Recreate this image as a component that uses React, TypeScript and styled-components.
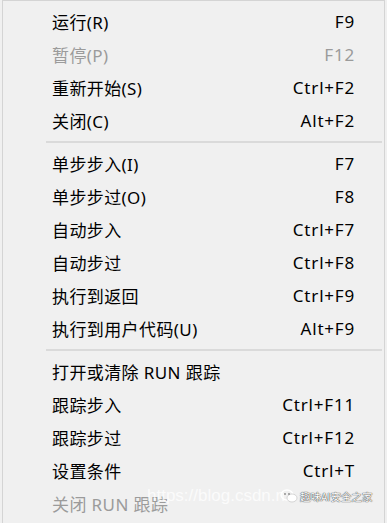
import React from 'react';
import styled, { createGlobalStyle } from 'styled-components';

type Item = { label: string; shortcut?: string; disabled?: boolean };

const groups: Item[][] = [
  [
    { label: '运行(R)', shortcut: 'F9' },
    { label: '暂停(P)', shortcut: 'F12', disabled: true },
    { label: '重新开始(S)', shortcut: 'Ctrl+F2' },
    { label: '关闭(C)', shortcut: 'Alt+F2' },
  ],
  [
    { label: '单步步入(I)', shortcut: 'F7' },
    { label: '单步步过(O)', shortcut: 'F8' },
    { label: '自动步入', shortcut: 'Ctrl+F7' },
    { label: '自动步过', shortcut: 'Ctrl+F8' },
    { label: '执行到返回', shortcut: 'Ctrl+F9' },
    { label: '执行到用户代码(U)', shortcut: 'Alt+F9' },
  ],
  [
    { label: '打开或清除 RUN 跟踪' },
    { label: '跟踪步入', shortcut: 'Ctrl+F11' },
    { label: '跟踪步过', shortcut: 'Ctrl+F12' },
    { label: '设置条件', shortcut: 'Ctrl+T' },
    { label: '关闭 RUN 跟踪', disabled: true },
  ],
];

const App: React.FC = () => {
  return (
    <>
      <GlobalStyle />
      <S.Page>
        <S.Menu>
          {groups.map((group, gi) => (
            <React.Fragment key={gi}>
              {gi > 0 && <S.Separator />}
              {group.map((item) => (
                <S.Row key={item.label} $disabled={item.disabled}>
                  <S.Label>{item.label}</S.Label>
                  <S.Shortcut>{item.shortcut}</S.Shortcut>
                </S.Row>
              ))}
            </React.Fragment>
          ))}
          <S.Watermark>
            <S.Url>https://blog.csdn.n</S.Url>
            <S.Badge>
              <svg width="18" height="14" viewBox="0 0 18 14">
                <ellipse cx="7" cy="6" rx="6" ry="5" fill="none" stroke="#fff" strokeWidth="1.4" />
                <ellipse cx="12" cy="9" rx="5" ry="4" fill="#fff" stroke="#bbb" strokeWidth="0.6" />
                <circle cx="5" cy="5" r="0.9" fill="#888" />
                <circle cx="9" cy="5" r="0.9" fill="#888" />
              </svg>
              <S.BadgeText>趣味AI安全之家</S.BadgeText>
            </S.Badge>
          </S.Watermark>
        </S.Menu>
      </S.Page>
    </>
  );
};

const GlobalStyle = createGlobalStyle`
  body {
    margin: 0;
    background: #f0f0f0;
    font-family: "Noto Sans", "Noto Sans CJK SC", sans-serif;
  }
`;

const S = {
  Page: styled.div`
    width: 387px;
    height: 523px;
    overflow: hidden;
    background: #f0f0f0;
    padding-left: 2px;
    box-sizing: border-box;
  `,
  Menu: styled.div`
    position: relative;
    width: 383px;
    height: 540px;
    box-sizing: border-box;
    border: 1px solid #d4d4d4;
    background: #f0f0f0;
    padding-top: 4px;
  `,
  Row: styled.div<{ $disabled?: boolean }>`
    display: flex;
    align-items: center;
    justify-content: space-between;
    height: 33px;
    padding-left: 49px;
    padding-right: 29px;
    font-size: 17px;
    color: ${(p) => (p.$disabled ? '#9b9b9b' : '#000')};
  `,
  Label: styled.span`
    white-space: nowrap;
    letter-spacing: 0.4px;
  `,
  Shortcut: styled.span`
    white-space: nowrap;
    text-align: right;
    letter-spacing: 0.8px;
  `,
  Separator: styled.div`
    height: 2px;
    margin: 4px 2px 4px 43px;
    background: #dadada;
  `,
  Watermark: styled.div`
    position: absolute;
    left: 144px;
    top: 485px;
    display: flex;
    align-items: center;
    pointer-events: none;
  `,
  Url: styled.span`
    font-family: "Liberation Sans", Arial, sans-serif;
    font-size: 17px;
    color: rgba(255, 255, 255, 0.75);
    white-space: nowrap;
  `,
  Badge: styled.div`
    display: flex;
    align-items: center;
    gap: 2px;
    margin-left: -5px;
  `,
  BadgeText: styled.span`
    font-family: "Noto Sans CJK SC", sans-serif;
    font-size: 10.5px;
    white-space: nowrap;
    color: #fff;
    text-shadow: 0 0 1px #333, 0 0 1px #333;
  `,
};

export default App;
